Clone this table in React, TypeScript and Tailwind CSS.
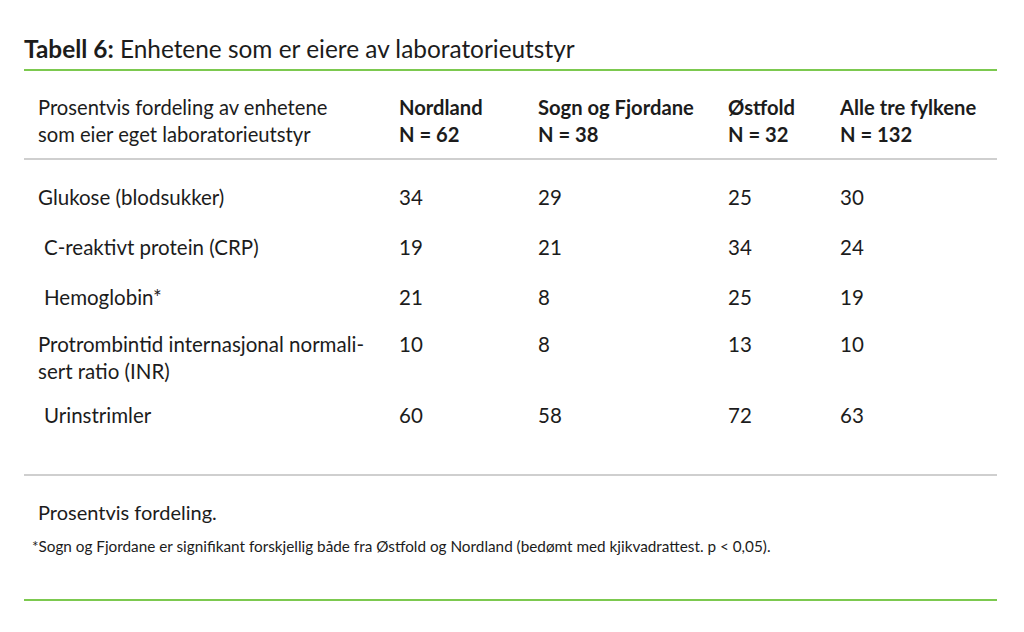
const rows = [
  { label: "Glukose (blodsukker)", indent: false, values: ["34", "29", "25", "30"], mt: "mt-[24px]" },
  { label: "C-reaktivt protein (CRP)", indent: true, values: ["19", "21", "34", "24"], mt: "mt-[23px]" },
  { label: "Hemoglobin*", indent: true, values: ["21", "8", "25", "19"], mt: "mt-[23px]" },
  {
    label: "Protrombintid internasjonal normali-\nsert ratio (INR)",
    indent: false,
    values: ["10", "8", "13", "10"],
    mt: "mt-[20px]",
  },
  { label: "Urinstrimler", indent: true, values: ["60", "58", "72", "63"], mt: "mt-[17px]" },
];

const cols = [
  { name: "Nordland", n: "N = 62" },
  { name: "Sogn og Fjordane", n: "N = 38" },
  { name: "Østfold", n: "N = 32" },
  { name: "Alle tre fylkene", n: "N = 132" },
];

const grid = "grid grid-cols-[361px_139px_190px_112px_1fr] px-[14px]";

export default function App() {
  return (
    <div
      className="w-[1024px] h-[632px] bg-white text-[#1c1c1c] px-[24px] pt-[35px]"
      style={{ fontFamily: "Lato, 'Open Sans', sans-serif" }}
    >
      <h1 className="text-[24.4px] leading-[28px] mb-[6px]">
        <span className="font-bold">Tabell 6:</span> Enhetene som er eiere av laboratorieutstyr
      </h1>
      <div className="h-[2px] w-[973px] bg-[#7cc94f]" />

      <div className={`${grid} pt-[23px] pb-[10px] text-[20.2px] leading-[27px]`}>
        <div>
          Prosentvis fordeling av enhetene
          <br />
          som eier eget laboratorieutstyr
        </div>
        {cols.map((c) => (
          <div key={c.name} className="font-bold">
            {c.name}
            <br />
            {c.n}
          </div>
        ))}
      </div>
      <div className="h-[2px] w-[973px] bg-[#cfcfcf]" />

      <div className="text-[20.5px] leading-[27px]">
        {rows.map((r) => (
          <div key={r.label} className={`${grid} ${r.mt}`}>
            <div className={`whitespace-pre-line ${r.indent ? "pl-[6px]" : ""}`}>{r.label}</div>
            {r.values.map((v, i) => (
              <div key={i}>{v}</div>
            ))}
          </div>
        ))}
      </div>

      <div className="h-[2px] w-[973px] bg-[#cfcfcf] mt-[45px]" />

      <div className="px-[14px] pt-[23px]">
        <p className="text-[20px] leading-[27px]">Prosentvis fordeling.</p>
        <p className="text-[15.3px] leading-[20px] mt-[10px] -ml-[6px]">
          *Sogn og Fjordane er signifikant forskjellig både fra Østfold og Nordland (bedømt med kjikvadrattest. p &lt; 0,05).
        </p>
      </div>

      <div className="h-[2px] w-[973px] bg-[#7cc94f] mt-[43px]" />
    </div>
  );
}
